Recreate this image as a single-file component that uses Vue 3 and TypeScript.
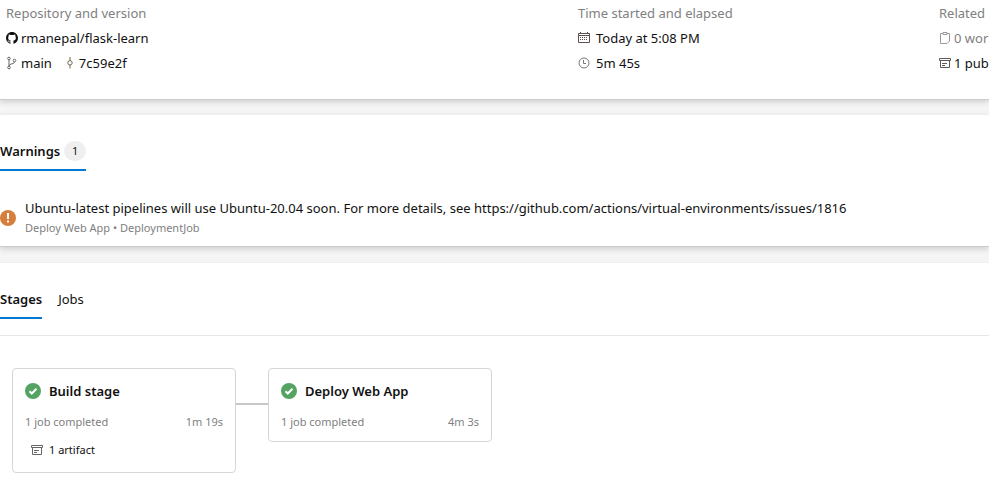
<script setup lang="ts">
import { ref } from 'vue'

interface Stage {
  name: string
  jobs: string
  duration: string
  artifacts?: string
}

const stages: Stage[] = [
  { name: 'Build stage', jobs: '1 job completed', duration: '1m 19s', artifacts: '1 artifact' },
  { name: 'Deploy Web App', jobs: '1 job completed', duration: '4m 3s' },
]

const tabs = ['Stages', 'Jobs']
const activeTab = ref('Stages')
</script>

<template>
  <main class="page">
    <section class="panel summary">
      <div class="column">
        <div class="row label">Repository and version</div>
        <div class="row">
          <a class="item" href="#repository">
            <svg class="icon" width="12" height="12" viewBox="0 0 16 16" aria-hidden="true">
              <path fill="#111" d="M8 0C3.58 0 0 3.58 0 8c0 3.54 2.29 6.53 5.47 7.59.4.07.55-.17.55-.38 0-.19-.01-.82-.01-1.49-2.01.37-2.53-.49-2.69-.94-.09-.23-.48-.94-.82-1.13-.28-.15-.68-.52-.01-.53.63-.01 1.08.58 1.23.82.72 1.21 1.87.87 2.33.66.07-.52.28-.87.51-1.07-1.78-.2-3.64-.89-3.64-3.95 0-.87.31-1.59.82-2.15-.08-.2-.36-1.02.08-2.12 0 0 .67-.21 2.2.82a7.6 7.6 0 0 1 4 0c1.53-1.04 2.2-.82 2.2-.82.44 1.1.16 1.92.08 2.12.51.56.82 1.27.82 2.15 0 3.07-1.87 3.75-3.65 3.95.29.25.54.73.54 1.48 0 1.07-.01 1.93-.01 2.2 0 .21.15.46.55.38A8.01 8.01 0 0 0 16 8c0-4.42-3.58-8-8-8z" />
            </svg>
            rmanepal/flask-learn
          </a>
        </div>
        <div class="row">
          <a class="item" href="#branch">
            <svg class="icon" width="12" height="14" viewBox="0 0 12 14" fill="none" stroke="#666" aria-hidden="true">
              <circle cx="3" cy="2.500" r="1.300" />
              <circle cx="3" cy="11.500" r="1.300" />
              <circle cx="8.500" cy="4.500" r="1.300" />
              <path d="M3 4v6M8.500 6c0 2.500-5 1-5.500 4" />
            </svg>
            main
          </a>
          <a class="item commit" href="#commit">
            <svg class="icon" width="8" height="14" viewBox="0 0 8 14" fill="none" stroke="#75644c" aria-hidden="true">
              <path d="M4 1v3.500M4 9v3.500" />
              <circle cx="4" cy="6.800" r="2.200" />
            </svg>
            7c59e2f
          </a>
        </div>
      </div>

      <div class="column timing">
        <div class="row label">Time started and elapsed</div>
        <div class="row item">
          <svg class="icon" width="12" height="12" viewBox="0 0 12 12" fill="none" stroke="#5a5050" aria-hidden="true">
            <path d="M.5 1.500h11v9H.5zM.5 3.500h11M2.500 0v2M9.500 0v2" />
            <path d="M2 5.500h8M2 7.500h8" stroke-dasharray="1 1" />
          </svg>
          Today at 5:08 PM
        </div>
        <div class="row item">
          <svg class="icon" width="12" height="12" viewBox="0 0 12 12" fill="none" stroke="#777" aria-hidden="true">
            <circle cx="6" cy="6" r="5" />
            <path d="M5.500 3v3.500H8" />
          </svg>
          5m 45s
        </div>
      </div>

      <div class="column">
        <div class="row label">Related</div>
        <div class="row item muted">
          <svg class="icon" width="12" height="14" viewBox="0 0 12 14" fill="none" stroke="#999" aria-hidden="true">
            <path d="M4 2.500H1.500v10H8l2.500-2.500V2.500H8M4 1.500h4v2H4z" />
          </svg>
          0 work items
        </div>
        <a class="row item" href="#artifacts">
          <svg class="icon" width="12" height="12" viewBox="0 0 12 12" fill="none" stroke="#5c5c5c" aria-hidden="true">
            <path d="M.5 1.500h11v2H.5zM1.500 3.500v7h9v-7M3 6.500h5M3 8.500h3" />
          </svg>
          1 published
        </a>
      </div>
    </section>

    <section class="panel warnings">
      <div class="tabs" role="tablist">
        <button class="tab active" type="button" role="tab" aria-selected="true">
          Warnings<span class="count">1</span>
        </button>
      </div>
      <div class="warning">
        <svg class="icon" width="16" height="16" viewBox="0 0 16 16" aria-hidden="true">
          <circle cx="8" cy="8" r="8" fill="#d67f3c" />
          <path d="M7 3h2v6H7zM7 10.500h2v2H7z" fill="#fff" />
        </svg>
        <div>
          <div class="message">Ubuntu-latest pipelines will use Ubuntu-20.04 soon. For more details, see https://github.com/actions/virtual-environments/issues/1816</div>
          <div class="source">Deploy Web App • DeploymentJob</div>
        </div>
      </div>
    </section>

    <section class="run">
      <div class="tabs" role="tablist">
        <button
          v-for="tab in tabs"
          :key="tab"
          class="tab"
          :class="{ active: tab === activeTab }"
          type="button"
          role="tab"
          :aria-selected="tab === activeTab"
          @click="activeTab = tab"
        >{{ tab }}</button>
      </div>
      <div class="stages">
        <template v-for="(stage, index) in stages" :key="stage.name">
          <div v-if="index > 0" class="connector"></div>
          <article class="stage">
            <h2 class="title">
              <svg class="icon" width="16" height="16" viewBox="0 0 16 16" aria-hidden="true">
                <circle cx="8" cy="8" r="8" fill="#55a362" />
                <path d="M4.500 8.200l2.300 2.300 4.700-4.700" fill="none" stroke="#fff" stroke-width="2" />
              </svg>
              {{ stage.name }}
            </h2>
            <div class="details">
              <span>{{ stage.jobs }}</span>
              <span>{{ stage.duration }}</span>
            </div>
            <a v-if="stage.artifacts" class="artifacts" href="#artifacts">
              <svg class="icon" width="12" height="12" viewBox="0 0 12 12" fill="none" stroke="#666" aria-hidden="true">
                <path d="M.5 1.500h11v2H.5zM1.500 3.500v7h9v-7M3 6.500h5M3 8.500h3" />
              </svg>
              {{ stage.artifacts }}
            </a>
          </article>
        </template>
      </div>
    </section>
  </main>
</template>

<style>
body {
  margin: 0;
  background: #fff;
}
</style>

<style scoped>
.page {
  display: flex;
  flex-direction: column;
  gap: 15px;
  overflow: hidden;
  background: #f5f5f5;
  color: #111;
  font: 13px/20px "Segoe UI", "Noto Sans", "Open Sans", sans-serif;
}

a {
  color: inherit;
  text-decoration: none;
}

.icon {
  flex: none;
}

.panel {
  background: #fff;
  border-bottom: 1px solid #ccc;
  box-shadow: 0 2px 6px rgba(0, 0, 0, 0.16);
}

.summary {
  display: grid;
  grid-template-columns: minmax(0, 572fr) minmax(0, 361fr) minmax(0, 50fr);
  padding: 0 0 24px 6px;
}

.row {
  display: flex;
  align-items: center;
  height: 25px;
  white-space: nowrap;
}

.item {
  display: flex;
  align-items: center;
  gap: 3px;
}

.timing .item {
  gap: 6px;
}

.commit {
  gap: 5px;
  margin-left: 14px;
}

.label,
.muted {
  color: #808080;
}

.warnings {
  padding: 18px 0 8px;
}

.tabs {
  display: flex;
  gap: 16px;
}

.tab {
  display: flex;
  align-items: center;
  gap: 4px;
  height: 38px;
  padding: 0;
  border: 0;
  border-bottom: 2px solid transparent;
  background: none;
  color: inherit;
  font: inherit;
  cursor: pointer;
}

.tab.active {
  border-color: #0078d4;
  font-weight: 600;
}

.count {
  width: 22px;
  border-radius: 10px;
  background: #efefef;
  font-size: 11px;
  font-weight: 400;
  text-align: center;
}

.warning {
  display: flex;
  align-items: center;
  gap: 9px;
  margin-top: 27px;
  white-space: nowrap;
}

.source {
  color: #808080;
  font-size: 11px;
}

.run {
  padding-top: 18px;
  background: #fff;
  border-top: 1px solid #f0f0f0;
}

.stages {
  display: flex;
  align-items: flex-start;
  margin-top: 16px;
  padding: 32px 12px 8px;
  border-top: 1px solid #e6e6e6;
}

.connector {
  width: 32px;
  height: 2px;
  margin-top: 35px;
  background: #c8c8c8;
}

.stage {
  box-sizing: border-box;
  width: 224px;
  padding: 10px 12px 9px;
  border: 1px solid #d6d6d6;
  border-radius: 4px;
}

.title {
  display: flex;
  align-items: center;
  gap: 8px;
  height: 24px;
  margin: 0;
  font-size: 13px;
  font-weight: 600;
}

.details {
  display: flex;
  justify-content: space-between;
  margin-top: 9px;
  color: #808080;
  font-size: 11px;
}

.artifacts {
  display: flex;
  align-items: center;
  gap: 6px;
  margin-top: 8px;
  padding: 0 0 3px 6px;
  font-size: 11px;
}
</style>
